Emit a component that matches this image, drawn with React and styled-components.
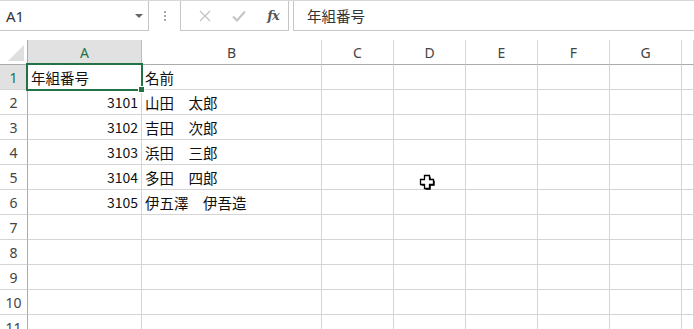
import React from "react";
import styled, { createGlobalStyle } from "styled-components";

const GlobalStyle = createGlobalStyle`
  html, body { margin: 0; padding: 0; background: #fff; overflow: hidden; }
  * { box-sizing: border-box; }
`;

const Page = styled.div`
  width: 694px;
  height: 329px;
  overflow: hidden;
  position: relative;
  background: #fff;
  font-family: "Noto Sans", "Noto Sans CJK JP", sans-serif;
`;

const Bar = styled.div`
  display: flex;
  height: 31px;
  border-top: 1px solid #d8d8d8;
`;

const NameBox = styled.div`
  width: 149px;
  display: flex;
  align-items: center;
  justify-content: space-between;
  padding: 0 5px 0 6px;
  border-right: 1px solid #c6c6c6;
  border-bottom: 1px solid #c6c6c6;
  font-size: 15px;
  color: #333;
`;

const Caret = styled.span`
  width: 0;
  height: 0;
  border-left: 4px solid transparent;
  border-right: 4px solid transparent;
  border-top: 4px solid #666;
`;

const DotsArea = styled.div`
  width: 31px;
  display: flex;
  flex-direction: column;
  align-items: center;
  justify-content: center;
  gap: 2px;
`;

const Dot = styled.span`
  width: 2px;
  height: 2px;
  background: #a8a8a8;
`;

const ButtonGroup = styled.div`
  width: 109px;
  display: flex;
  align-items: center;
  border: 1px solid #c6c6c6;
  border-top: none;
  padding-left: 9px;
`;

const BarButton = styled.div`
  width: ${(p) => p.$w}px;
  display: flex;
  align-items: center;
  justify-content: center;
  color: ${(p) => p.$color || "#c4c4c4"};
`;

const Fx = styled.span`
  font-family: "DejaVu Serif", "Liberation Serif", serif;
  font-style: italic;
  font-size: 13px;
  color: #555;
  letter-spacing: -1px;
  font-weight: bold;
`;

const FormulaInput = styled.div`
  flex: 1;
  margin-left: 4px;
  border-left: 1px solid #c6c6c6;
  border-bottom: 1px solid #c6c6c6;
  display: flex;
  align-items: center;
  padding-left: 13px;
  font-family: "Noto Sans CJK JP", sans-serif;
  font-size: 14.5px;
  color: #333;
`;

const Grid = styled.div`
  margin-top: 9px;
  display: grid;
  grid-template-columns: 28px 114px 180px 72px 72px 72px 72px 72px 12px;
  grid-template-rows: 25px;
  grid-auto-rows: 25px;
`;

const Corner = styled.div`
  position: relative;
  border-right: 1px solid #ababab;
  border-bottom: 1px solid #ababab;
  background: #fff;
  &::after {
    content: "";
    position: absolute;
    right: 3px;
    bottom: 3px;
    width: 0;
    height: 0;
    border-left: 16px solid transparent;
    border-bottom: 16px solid #dfdfdf;
  }
`;

const ColHead = styled.div`
  display: flex;
  align-items: center;
  justify-content: center;
  font-size: 14px;
  color: ${(p) => (p.$active ? "#217346" : "#444")};
  background: ${(p) => (p.$active ? "#e1e1e1" : "#fff")};
  border-right: 1px solid ${(p) => (p.$active ? "#bdbdbd" : "#d8d8d8")};
  border-bottom: 1px solid #ababab;
  padding-top: 1px;
  overflow: hidden;
`;

const RowHead = styled.div`
  display: flex;
  align-items: center;
  justify-content: center;
  font-size: 14px;
  color: ${(p) => (p.$active ? "#217346" : "#444")};
  background: ${(p) => (p.$active ? "#e1e1e1" : "#fff")};
  border-right: 1px solid #ababab;
  border-bottom: 1px solid #d4d4d4;
`;

const Cell = styled.div`
  position: relative;
  display: flex;
  align-items: center;
  justify-content: ${(p) => (p.$num ? "flex-end" : "flex-start")};
  padding: 0 3px 0 3px;
  border-right: 1px solid #d4d4d4;
  border-bottom: 1px solid #d4d4d4;
  font-family: "Noto Sans CJK JP", sans-serif;
  font-size: ${(p) => (p.$num ? "14px" : "14.5px")};
  color: #111;
  white-space: nowrap;
  overflow: visible;
`;

const Selection = styled.div`
  position: absolute;
  left: -2px;
  top: -2px;
  right: -2px;
  bottom: -2px;
  border: 2px solid #217346;
  pointer-events: none;
  z-index: 2;
`;

const FillHandle = styled.div`
  position: absolute;
  right: -4px;
  bottom: -4px;
  width: 7px;
  height: 7px;
  background: #217346;
  border: 1px solid #fff;
  z-index: 3;
`;

const Cursor = styled.svg`
  position: absolute;
  left: 419px;
  top: 174px;
  z-index: 5;
`;

const cols = ["A", "B", "C", "D", "E", "F", "G", ""];
const data = [
  ["年組番号", "名前"],
  ["3101", "山田　太郎"],
  ["3102", "吉田　次郎"],
  ["3103", "浜田　三郎"],
  ["3104", "多田　四郎"],
  ["3105", "伊五澤　伊吾造"],
];

export default function App() {
  const rows = Array.from({ length: 11 }, (_, i) => i + 1);
  return (
    <Page>
      <GlobalStyle />
      <Bar>
        <NameBox>
          <span>A1</span>
          <Caret />
        </NameBox>
        <DotsArea>
          <Dot />
          <Dot />
          <Dot />
        </DotsArea>
        <ButtonGroup>
          <BarButton $w={30}>
            <svg width="12" height="12" viewBox="0 0 12 12">
              <path d="M1 1 L11 11 M11 1 L1 11" stroke="#c4c4c4" strokeWidth="1.3" fill="none" />
            </svg>
          </BarButton>
          <BarButton $w={38}>
            <svg width="14" height="12" viewBox="0 0 14 12">
              <path d="M1 6.5 L5 10.5 L13 1.5" stroke="#c4c4c4" strokeWidth="2" fill="none" />
            </svg>
          </BarButton>
          <BarButton $w={30} $color="#555">
            <Fx>fx</Fx>
          </BarButton>
        </ButtonGroup>
        <FormulaInput>年組番号</FormulaInput>
      </Bar>
      <Grid>
        <Corner />
        {cols.map((c, i) => (
          <ColHead key={i} $active={c === "A"}>
            {c}
          </ColHead>
        ))}
        {rows.map((r) => {
          const rowData = data[r - 1] || [];
          return (
            <React.Fragment key={r}>
              <RowHead $active={r === 1}>{r}</RowHead>
              {cols.map((c, ci) => {
                const v = rowData[ci];
                const isNum = v && /^\d+$/.test(v);
                const sel = r === 1 && ci === 0;
                return (
                  <Cell key={ci} $num={isNum}>
                    {v}
                    {sel && (
                      <>
                        <Selection />
                        <FillHandle />
                      </>
                    )}
                  </Cell>
                );
              })}
            </React.Fragment>
          );
        })}
      </Grid>
      <Cursor width="17" height="17" viewBox="0 0 17 17">
        <path d="M5.5 1.5 H10.5 V5.5 H14.5 V10.5 H10.5 V14.5 H5.5 V10.5 H1.5 V5.5 H5.5 Z" fill="#000" transform="translate(1.2,1.2)" />
        <path d="M5.5 1.5 H10.5 V5.5 H14.5 V10.5 H10.5 V14.5 H5.5 V10.5 H1.5 V5.5 H5.5 Z" fill="#fff" stroke="#000" strokeWidth="1.3" />
      </Cursor>
    </Page>
  );
}
